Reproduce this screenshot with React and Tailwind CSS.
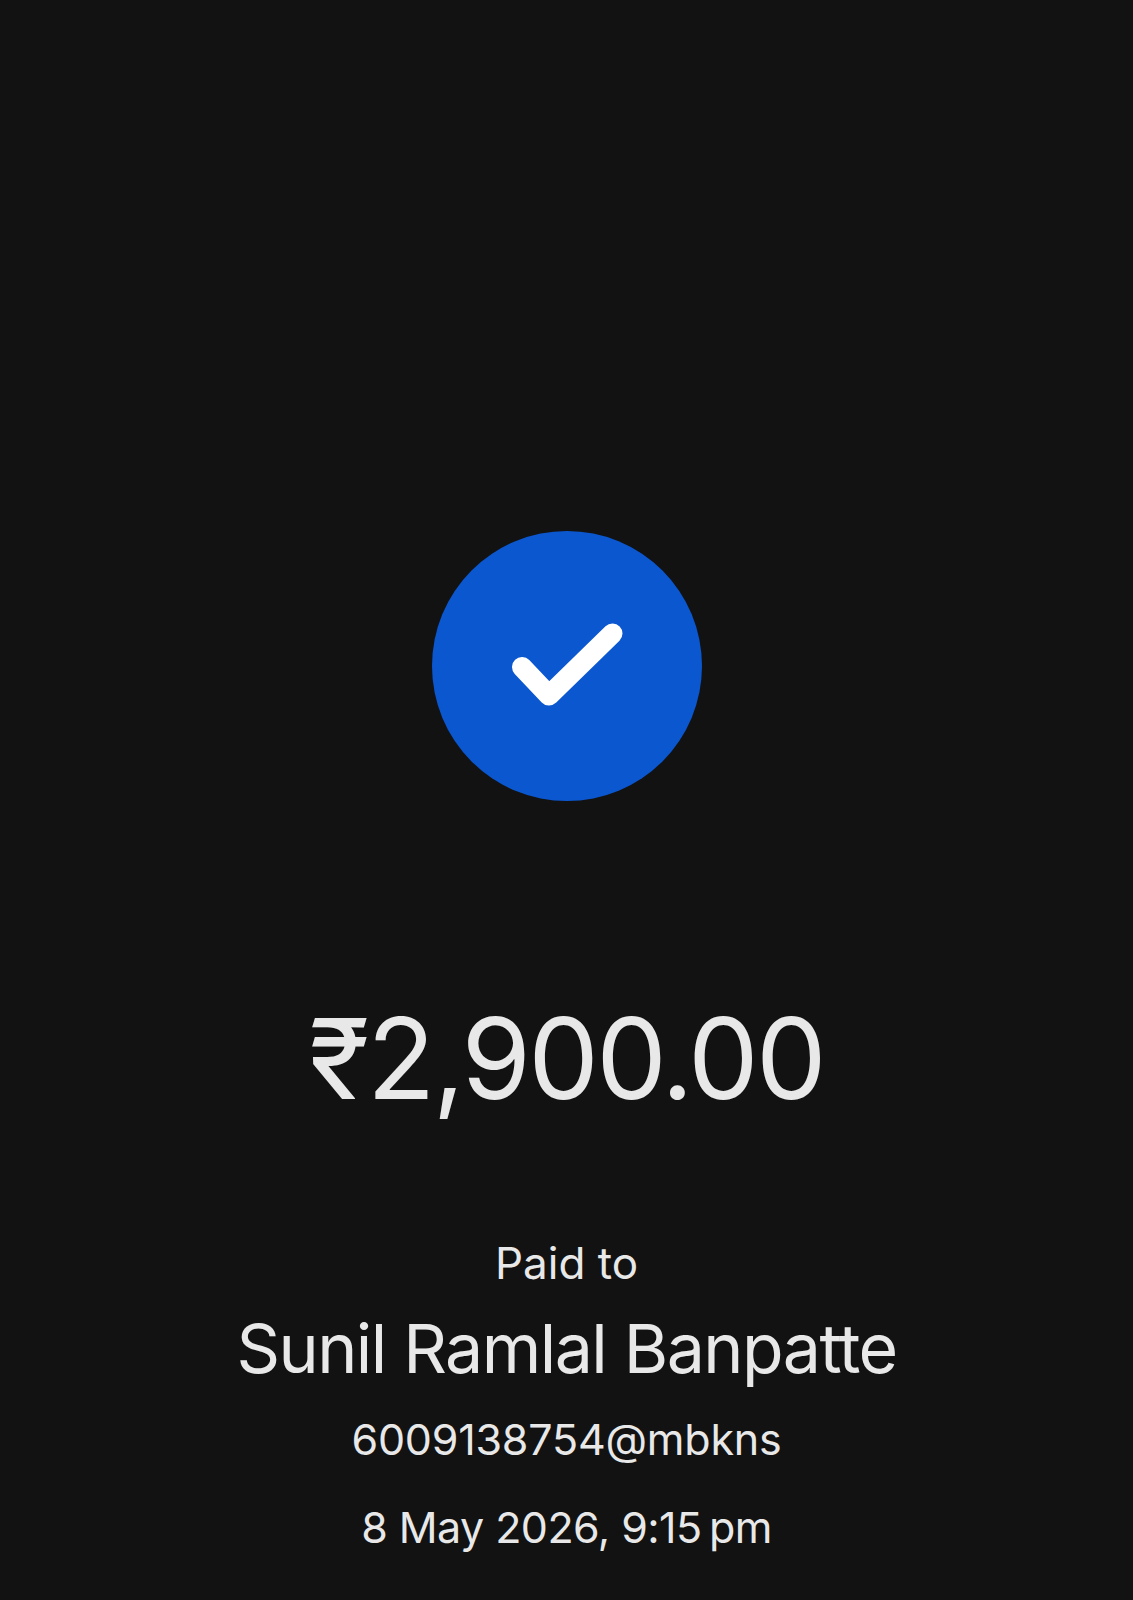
export default function App() {
    return (
        <div className="min-h-[1600px] bg-[#121212] flex flex-col items-center pt-[531px] font-['Inter','Noto_Sans',sans-serif] text-[#e8e8e8] overflow-hidden">
            <div className="w-[270px] h-[270px] rounded-full bg-[#0b57d0] flex items-center justify-center">
                <svg width="270" height="270" viewBox="0 0 270 270" fill="none">
                    <path d="M90 136 L117 164.5 L180.5 102.5" stroke="#fff" strokeWidth="20" strokeLinecap="round" strokeLinejoin="round" />
                </svg>
            </div>
            <div className="mt-[189px] text-[112px] leading-[136px] font-[380] tracking-[-2.7px]">₹2,900.00</div>
            <div className="mt-[111px] text-[44px] leading-[52px] font-[380]">Paid to</div>
            <div className="mt-[19px] text-[68px] leading-[80px] font-[380] tracking-[-1.55px]">Sunil Ramlal Banpatte</div>
            <div className="mt-[23px] text-[43px] leading-[56px] font-[380] tracking-[-0.2px]">6009138754@mbkns</div>
            <div className="mt-[32px] text-[43px] leading-[56px] font-[380] tracking-[-0.55px]">8 May 2026, 9:15{'\u202f'}pm</div>
        </div>
    );
}
